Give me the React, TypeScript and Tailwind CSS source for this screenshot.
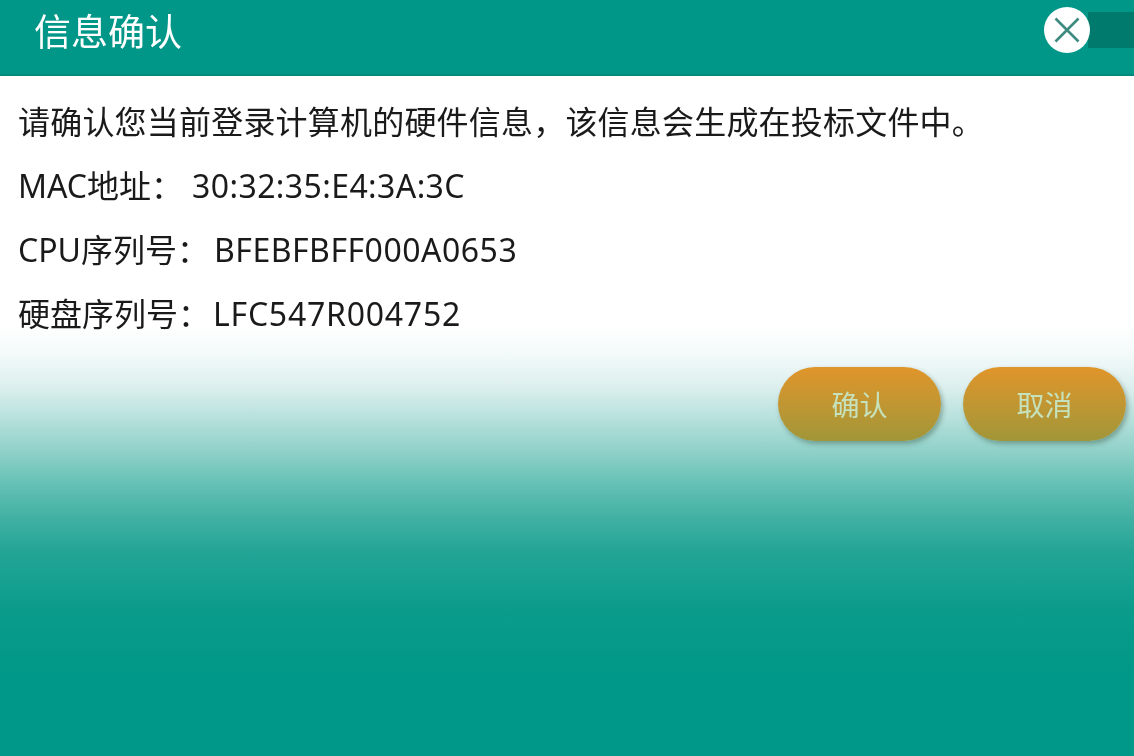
const font = { fontFamily: '"Noto Sans", "Noto Sans CJK SC", sans-serif' };

const rows = [
  { label: "MAC地址：", value: "30:32:35:E4:3A:3C", cls: "ml-[9px] tracking-[0.4px]" },
  { label: "CPU序列号：", value: "BFEBFBFF000A0653", cls: "ml-[5px] tracking-[0.5px]" },
  { label: "硬盘序列号：", value: "LFC547R004752", cls: "ml-[3px] tracking-[0.75px]" },
];

function CloseButton() {
  return (
    <div className="flex items-center">
      <button className="z-10 flex h-[46px] w-[46px] items-center justify-center rounded-full bg-white">
        <svg width="28" height="28" viewBox="0 0 28 28" fill="none" stroke="#3f8a80" strokeWidth="2.6">
          <path d="M2.5 2.5 L25.5 25.5 M25.5 2.5 L2.5 25.5" />
        </svg>
      </button>
      <div className="-ml-[2px] h-[36px] w-[46px] bg-[#007a6c]" />
    </div>
  );
}

export default function App() {
  return (
    <div
      className="flex h-[756px] w-[1134px] flex-col overflow-hidden bg-[linear-gradient(to_bottom,#ffffff_0px,#ffffff_325px,#f4fafa_353px,#dcefee_387px,#b5e0db_420px,#8dd0c8_453px,#62bfb3_487px,#3fb0a3_520px,#22a495_553px,#14a090_587px,#0a9b8b_613px,#009888_673px)]"
      style={font}
    >
      <header className="flex h-[76px] shrink-0 items-start justify-between border-b-2 border-[#008a7c] bg-[#009688] pl-[34px] pt-[7px]">
        <h1 className="text-[37px] leading-[50px] font-normal text-white blur-[0.4px]">信息确认</h1>
        <CloseButton />
      </header>
      <main className="flex flex-1 flex-col pl-[18px] pr-[8px] pt-[14px]">
        <p className="text-[32px] leading-[64px] tracking-[0.2px] text-[#1a1a1a] blur-[0.4px]">
          请确认您当前登录计算机的硬件信息，该信息会生成在投标文件中。
        </p>
        {rows.map((r) => (
          <p key={r.label} className="text-[32px] leading-[64px] text-[#1a1a1a] blur-[0.4px]">
            {r.label}
            <span className={r.cls}>{r.value}</span>
          </p>
        ))}
        <div className="mt-[21px] flex justify-end gap-[22px]">
          {["确认", "取消"].map((t) => (
            <button
              key={t}
              className="h-[74px] w-[163px] rounded-full bg-gradient-to-b from-[#e0952a] to-[#a09638] pt-[2px] text-[28px] text-[#c6e2bc] shadow-[2px_3px_5px_rgba(60,90,70,0.45)]"
            >
              <span className="blur-[0.4px]">{t}</span>
            </button>
          ))}
        </div>
      </main>
    </div>
  );
}
